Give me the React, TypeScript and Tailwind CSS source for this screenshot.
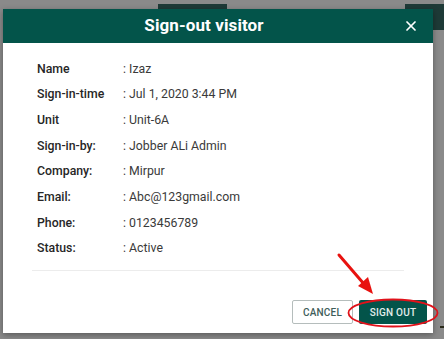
import { X } from 'lucide-react';

const ROWS: [string, string][] = [
  ['Name', 'Izaz'],
  ['Sign-in-time', 'Jul 1, 2020 3:44 PM'],
  ['Unit', 'Unit-6A'],
  ['Sign-in-by:', 'Jobber ALi Admin'],
  ['Company:', 'Mirpur'],
  ['Email:', 'Abc@123gmail.com'],
  ['Phone:', '0123456789'],
  ['Status:', 'Active'],
];

export default function App() {
  return (
    <div className="relative w-[444px] h-[339px] overflow-hidden bg-[#8a8a8a] font-['Roboto',sans-serif]">
      {/* page behind the overlay */}
      <div className="absolute left-[158px] top-[4px] w-[69px] h-[6px] bg-[#1e3a37]" />
      <div className="absolute left-[405px] top-[4px] w-[39px] h-[26px] bg-[#1e3a37]" />

      <div className="pt-[9px] pl-[3px]">
        <div className="relative w-[430px] h-[324px] bg-white flex flex-col shadow-[0_2px_6px_rgba(0,0,0,0.35)]">
          {/* header */}
          <div className="relative h-[34px] bg-[#03544a] flex items-center justify-center pr-[28px]">
            <h2 className="text-white text-[17px] font-bold tracking-[0.1px]">Sign-out visitor</h2>
            <button className="absolute right-[14px] top-[9px] text-white">
              <X size={16} strokeWidth={2.6} />
            </button>
          </div>

          {/* details */}
          <div className="px-[29px] pt-[13px]">
            <div className="pl-[5px]">
              {ROWS.map(([label, value]) => (
                <div key={label} className="flex items-center h-[25.7px] text-[12.3px]">
                  <span className="w-[86px] font-medium text-[#262626]">{label}</span>
                  <span className="text-[#3a3a3a]">: {value}</span>
                </div>
              ))}
            </div>
            <div className="mt-[8px] border-t border-[#ececec]" />
          </div>

          {/* actions */}
          <div className="mt-auto mb-[9px] mr-[6px] flex justify-end gap-[6px]">
            <button className="w-[61px] h-[24px] border border-[#b5bdbc] rounded-[2px] text-[10px] font-medium text-[#3f5e5b] tracking-[0.2px]">
              CANCEL
            </button>
            <button className="w-[68px] h-[24px] bg-[#03544a] rounded-[2px] text-[10px] font-medium text-[#e3eeec] tracking-[0.2px]">
              SIGN OUT
            </button>
          </div>
        </div>
      </div>

      {/* annotation: arrow + ellipse */}
      <svg className="absolute left-0 top-0 pointer-events-none" width="444" height="339" viewBox="0 0 444 339">
        <line x1="339" y1="255" x2="364" y2="284" stroke="#e8120f" strokeWidth="3" strokeLinecap="round" />
        <polygon points="373,294 358,286 368,277" fill="#e8120f" />
        <ellipse cx="393" cy="313" rx="44.5" ry="13.5" fill="none" stroke="#e0121a" strokeWidth="1.8" />
      </svg>
      <div className="absolute left-[440px] top-[326px] w-[4px] h-[2px] bg-[#2a2a1a]" />
    </div>
  );
}
